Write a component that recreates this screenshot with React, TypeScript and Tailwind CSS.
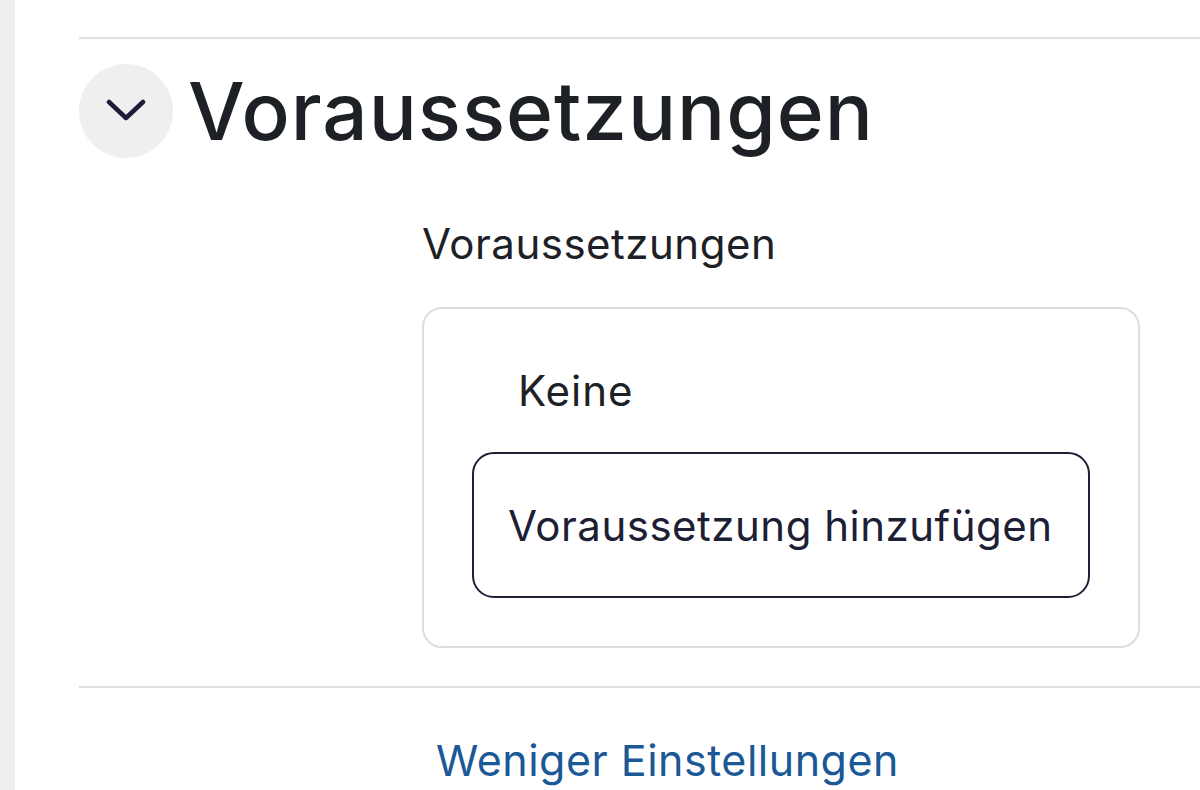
export default function App() {
  return (
    <div className="flex h-[790px] w-[1200px] overflow-hidden bg-white font-['Inter',sans-serif] text-[#1d2125]">
      <div className="w-[15px] shrink-0 bg-[#efefef]" />
      <div className="flex-1 pl-[64px]">
        <div className="mt-[37px] h-[2px] bg-[#dee2e6]" />
        <div className="mt-[25px] flex items-center gap-[15px]">
          <button className="flex h-[94px] w-[94px] shrink-0 items-center justify-center rounded-full bg-[#efefef]">
            <svg width="40" height="26" viewBox="0 0 40 26" fill="none">
              <path d="M3 4 L20 20 L37 4" stroke="#1d1d3a" strokeWidth="4.5" strokeLinecap="round" strokeLinejoin="round" />
            </svg>
          </button>
          <h2 className="text-[80px] font-medium leading-[94px] tracking-[1px]">Voraussetzungen</h2>
        </div>
        <div className="ml-[343px] mt-[62px] w-[718px] tracking-[0.5px]">
          <div className="text-[42px] leading-[48px]">Voraussetzungen</div>
          <div className="mt-[39px] rounded-[20px] border-2 border-[#dddddd] px-[48px] pb-[48px] pt-[58px]">
            <div className="pl-[46px] text-[42px] leading-[48px] tracking-[1px]">Keine</div>
            <button className="mt-[37px] flex h-[146px] w-full items-center rounded-[22px] border-2 border-[#1d2035] pl-[34px] text-[42px] tracking-[0.5px] text-[#1d2035]">
              Voraussetzung hinzufügen
            </button>
          </div>
        </div>
        <div className="mt-[38px] h-[2px] bg-[#dee2e6]" />
        <div className="ml-[357px] mt-[48px] text-[43px] leading-[48px] tracking-[0.5px] text-[#1b5896]">Weniger Einstellungen</div>
      </div>
    </div>
  );
}
